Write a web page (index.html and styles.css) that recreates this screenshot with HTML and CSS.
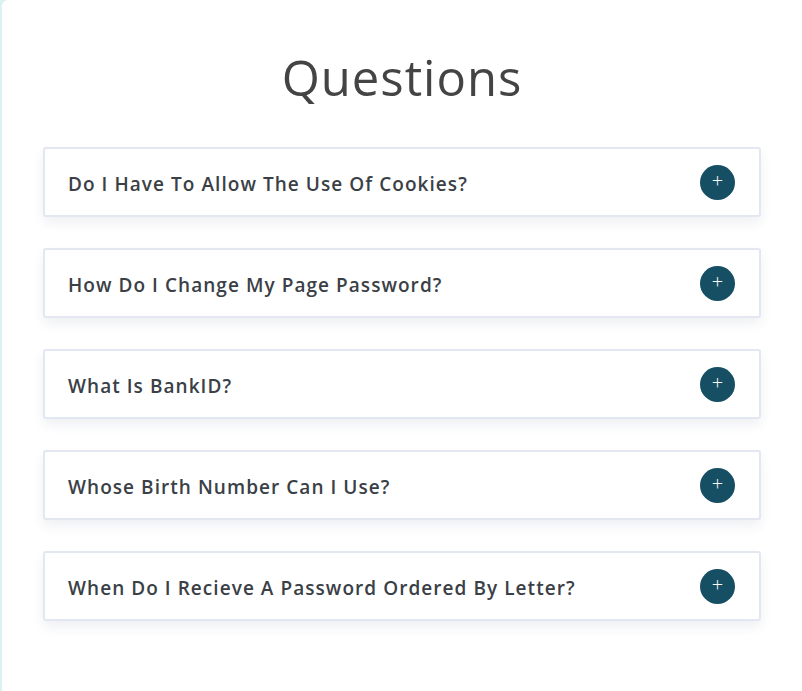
FILE: index.html
```html
<!DOCTYPE html>
<html>
<head>
<meta charset="utf-8">
<link rel="stylesheet" href="styles.css">
</head>
<body>
<main class="card">
  <h1 class="title">Questions</h1>
  <div class="faq">
    <div class="item"><span class="q">Do I Have To Allow The Use Of Cookies?</span><span class="btn">+</span></div>
    <div class="item"><span class="q">How Do I Change My Page Password?</span><span class="btn">+</span></div>
    <div class="item"><span class="q">What Is BankID?</span><span class="btn">+</span></div>
    <div class="item"><span class="q">Whose Birth Number Can I Use?</span><span class="btn">+</span></div>
    <div class="item"><span class="q">When Do I Recieve A Password Ordered By Letter?</span><span class="btn">+</span></div>
  </div>
</main>
</body>
</html>
```
FILE: styles.css
```css
html, body {
  margin: 0;
  padding: 0;
  height: 100%;
}
body {
  background: #dcf2f2;
  font-family: "Open Sans", "Noto Sans", sans-serif;
  overflow: hidden;
}
.card {
  margin-left: 2px;
  background: #ffffff;
  border-top-left-radius: 6px;
  min-height: 100%;
  box-sizing: border-box;
  padding: 46px 41px 40px 41px;
}
.title {
  margin: 0 0 39px 0;
  text-align: center;
  font-size: 49px;
  font-weight: 400;
  line-height: 62px;
  color: #444444;
  letter-spacing: 1px;
}
.faq {
  display: flex;
  flex-direction: column;
  gap: 31px;
}
.item {
  display: flex;
  align-items: center;
  justify-content: space-between;
  height: 70px;
  box-sizing: border-box;
  border: 2px solid #e3e7f1;
  border-radius: 3px;
  background: #fff;
  padding: 0 24px 0 23px;
  box-shadow: 0 6px 12px rgba(30, 40, 80, 0.07);
}
.q {
  font-size: 19px;
  font-weight: 600;
  color: #3a4046;
  letter-spacing: 1.05px;
  padding-top: 4px;
}
.btn {
  width: 35px;
  height: 35px;
  border-radius: 50%;
  background: #164f63;
  color: #fff;
  display: flex;
  align-items: center;
  justify-content: center;
  font-size: 20px;
  font-weight: 300;
  line-height: 1;
  padding-bottom: 2px;
  box-sizing: border-box;
}
```
